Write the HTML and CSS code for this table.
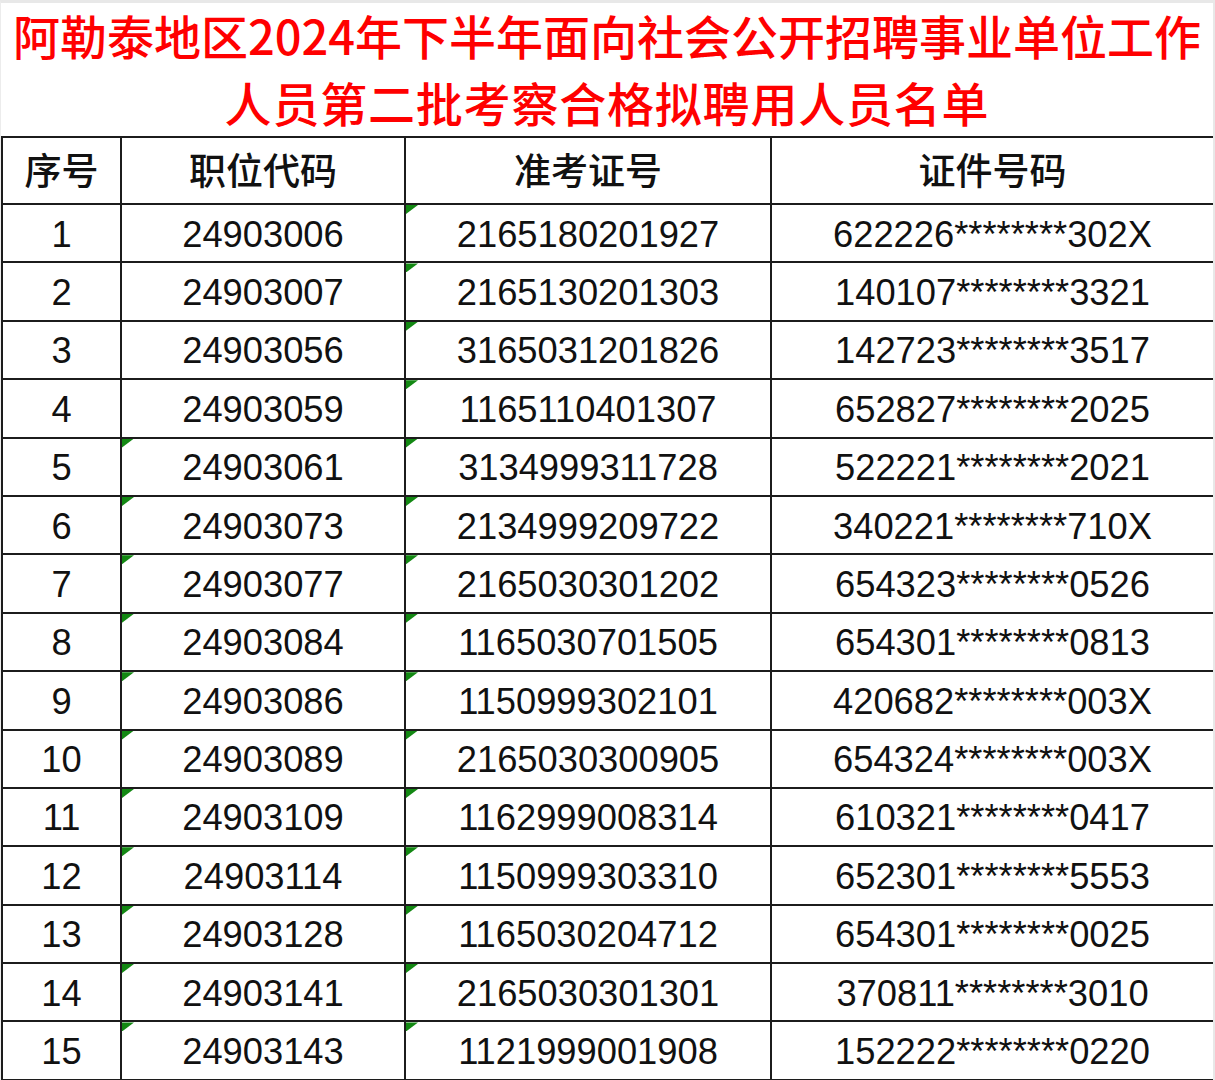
FILE: index.html
```html
<!DOCTYPE html>
<html lang="zh-CN">
<head>
<meta charset="utf-8">
<title>阿勒泰地区2024年下半年面向社会公开招聘事业单位工作人员第二批考察合格拟聘用人员名单</title>
<link rel="stylesheet" href="styles.css">
</head>
<body>
<div class="sheet">
  <h1 class="title">
    <span class="title-line">阿勒泰地区2024年下半年面向社会公开招聘事业单位工作</span>
    <span class="title-line second">人员第二批考察合格拟聘用人员名单</span>
  </h1>
  <table class="list">
    <colgroup>
      <col class="c1"><col class="c2"><col class="c3"><col class="c4">
    </colgroup>
    <thead>
      <tr><th>序号</th><th>职位代码</th><th>准考证号</th><th>证件号码</th></tr>
    </thead>
    <tbody>
      <tr><td>1</td><td>24903006</td><td class="flag">2165180201927</td><td>622226********302X</td></tr>
      <tr><td>2</td><td>24903007</td><td class="flag">2165130201303</td><td>140107********3321</td></tr>
      <tr><td>3</td><td>24903056</td><td class="flag">3165031201826</td><td>142723********3517</td></tr>
      <tr><td>4</td><td>24903059</td><td class="flag">1165110401307</td><td>652827********2025</td></tr>
      <tr><td>5</td><td class="flag">24903061</td><td class="flag">3134999311728</td><td>522221********2021</td></tr>
      <tr><td>6</td><td class="flag">24903073</td><td class="flag">2134999209722</td><td>340221********710X</td></tr>
      <tr><td>7</td><td class="flag">24903077</td><td class="flag">2165030301202</td><td>654323********0526</td></tr>
      <tr><td>8</td><td class="flag">24903084</td><td class="flag">1165030701505</td><td>654301********0813</td></tr>
      <tr><td>9</td><td class="flag">24903086</td><td class="flag">1150999302101</td><td>420682********003X</td></tr>
      <tr><td>10</td><td class="flag">24903089</td><td class="flag">2165030300905</td><td>654324********003X</td></tr>
      <tr><td>11</td><td class="flag">24903109</td><td class="flag">1162999008314</td><td>610321********0417</td></tr>
      <tr><td>12</td><td class="flag">24903114</td><td class="flag">1150999303310</td><td>652301********5553</td></tr>
      <tr><td>13</td><td class="flag">24903128</td><td class="flag">1165030204712</td><td>654301********0025</td></tr>
      <tr><td>14</td><td class="flag">24903141</td><td class="flag">2165030301301</td><td>370811********3010</td></tr>
      <tr><td>15</td><td class="flag">24903143</td><td class="flag">1121999001908</td><td>152222********0220</td></tr>
    </tbody>
  </table>
</div>
</body>
</html>
```

FILE: styles.css
```css
html, body {
  margin: 0;
  padding: 0;
  background: #ffffff;
}

.sheet {
  width: 1215px;
  box-sizing: border-box;
  border-top: 3px solid #e8e8e8;
  border-left: 1px solid #ececec;
  border-right: 2px solid #e8e8e8;
  overflow: hidden;
}

.title {
  margin: 0;
  height: 133px;
  display: flex;
  flex-direction: column;
  align-items: center;
  font-family: "Noto Sans CJK SC", "Liberation Sans", sans-serif;
  font-weight: 500;
  font-size: 47px;
  color: #ff0000;
}

.title-line {
  display: block;
  height: 68px;
  line-height: 68px;
  white-space: nowrap;
}

.title-line:first-child {
  height: 66px;
  line-height: 66px;
  margin-top: -1px;
}

.title-line.second {
  letter-spacing: 0.8px;
}

.list {
  border-collapse: collapse;
  table-layout: fixed;
  width: 1212px;
  font-family: "Liberation Sans", "Noto Sans CJK SC", sans-serif;
  color: #111111;
}

.c1 { width: 119px; }
.c2 { width: 284px; }
.c3 { width: 366px; }
.c4 { width: 443px; }

.list th,
.list td {
  border: 2px solid #1c1c1c;
  padding: 0;
  text-align: center;
  vertical-align: middle;
}

.list th {
  height: 67px;
  font-family: "Noto Sans CJK SC", "Liberation Sans", sans-serif;
  font-weight: 500;
  font-size: 37px;
  line-height: 1;
  padding-bottom: 3px;
  box-sizing: border-box;
}

.list td {
  height: 58.4px;
  font-size: 36.3px;
  line-height: 1;
  padding-top: 3px;
  box-sizing: border-box;
}

.list td.flag {
  position: relative;
}

.list td.flag::before {
  content: "";
  position: absolute;
  left: 0;
  top: 0;
  width: 12px;
  height: 9px;
  background: #138813;
  clip-path: polygon(0 0, 100% 0, 0 100%);
}
```
